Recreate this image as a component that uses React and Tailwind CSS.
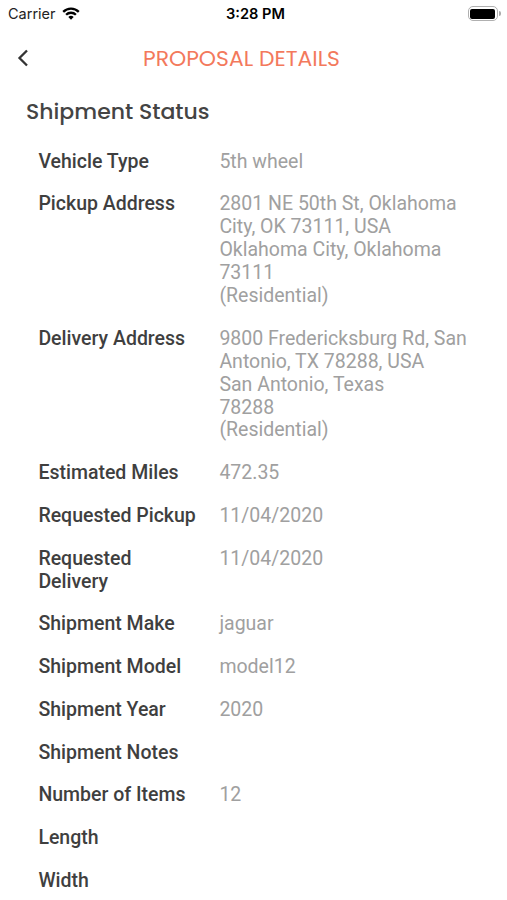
// src/screens/ProposalDetails.jsx
const details = [
  { label: "Vehicle Type", lines: ["5th wheel"] },
  {
    label: "Pickup Address",
    lines: ["2801 NE 50th St, Oklahoma", "City, OK 73111, USA", "Oklahoma City, Oklahoma", "73111", "(Residential)"],
  },
  {
    label: "Delivery Address",
    lines: ["9800 Fredericksburg Rd, San", "Antonio, TX 78288, USA", "San Antonio, Texas", "78288", "(Residential)"],
  },
  { label: "Estimated Miles", lines: ["472.35"] },
  { label: "Requested Pickup", lines: ["11/04/2020"] },
  { label: "Requested Delivery", lines: ["11/04/2020"] },
  { label: "Shipment Make", lines: ["jaguar"] },
  { label: "Shipment Model", lines: ["model12"] },
  { label: "Shipment Year", lines: ["2020"] },
  { label: "Shipment Notes", lines: [] },
  { label: "Number of Items", lines: ["12"] },
  { label: "Length", lines: [] },
  { label: "Width", lines: [] },
];

function WifiIcon() {
  return (
    <svg width="18" height="13" viewBox="0 0 18 13" fill="none" stroke="#000" strokeWidth="2.3">
      <path d="M1.2 4.9a11 11 0 0 1 15.6 0" />
      <path d="M4.1 7.8a6.9 6.9 0 0 1 9.8 0" />
      <path d="M9 12.7 6.3 10a3.8 3.8 0 0 1 5.4 0z" fill="#000" stroke="none" />
    </svg>
  );
}

function StatusBar() {
  return (
    <div className="grid h-[27px] grid-cols-3 items-center pl-2 pr-[6px] text-black">
      <div className="flex items-center gap-1.5">
        <span className="font-['Inter',sans-serif] text-[14.5px] text-[#222]">Carrier</span>
        <WifiIcon />
      </div>
      <span className="whitespace-nowrap pl-[2px] pt-[2px] text-center font-['Inter',sans-serif] text-[14.6px] font-semibold">
        3:28 PM
      </span>
      <div className="flex items-center justify-end gap-px">
        <div className="h-[15px] w-[30px] rounded-[5px] border border-[#b0b0b0] p-[1.5px]">
          <div className="h-full rounded-[2px] bg-black" />
        </div>
        <div className="h-[5px] w-[2px] rounded-r-full bg-[#aaa]" />
      </div>
    </div>
  );
}

function DetailRow({ label, lines }) {
  return (
    <div className="flex text-[19.5px] leading-[22.9px]">
      <div className="w-[181px] shrink-0 pr-5 font-medium text-[#3f3f3f]">{label}</div>
      <div className="whitespace-nowrap text-[#a0a0a0]">
        {lines.map((line) => (
          <div key={line}>{line}</div>
        ))}
      </div>
    </div>
  );
}

export default function App() {
  return (
    <div className="h-[900px] w-[507px] overflow-hidden bg-white font-['Roboto',sans-serif]">
      <StatusBar />

      {/* Header, title sits left of centre */}
      <header className="grid h-[62px] grid-cols-[46px_1fr_70px] items-center">
        <button aria-label="Back" className="pl-[17px]">
          <svg width="12" height="18" viewBox="0 0 12 18" fill="none" stroke="#333" strokeWidth="2.3">
            <path d="M10 1.5 2.5 9l7.5 7.5" />
          </svg>
        </button>
        <h1 className="whitespace-nowrap pt-[2px] text-center font-['Poppins','Inter',sans-serif] text-[21.9px] text-[#f3795c]">
          PROPOSAL DETAILS
        </h1>
      </header>

      <main className="pl-[26px]">
        <h2 className="h-[61.7px] pt-[6px] font-['Poppins','Inter',sans-serif] text-[22px] font-medium text-[#444]">
          Shipment Status
        </h2>
        <div className="space-y-[19.85px] pl-[12.4px]">
          {details.map((item) => (
            <DetailRow key={item.label} label={item.label} lines={item.lines} />
          ))}
        </div>
      </main>
    </div>
  );
}
